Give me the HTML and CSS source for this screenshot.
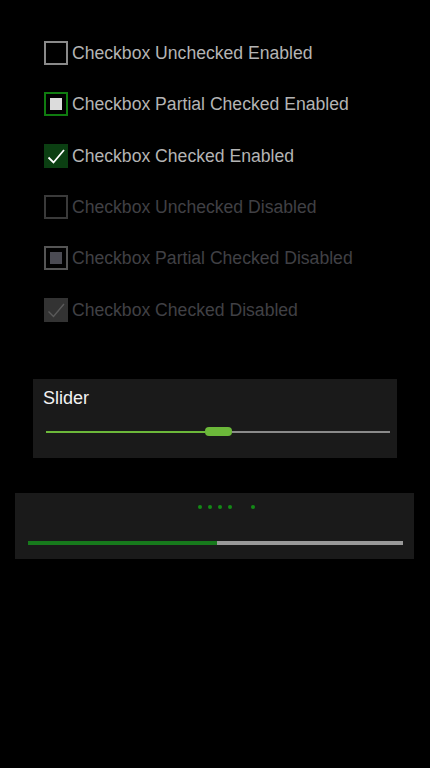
FILE: index.html
```html
<!DOCTYPE html>
<html>
<head>
<meta charset="utf-8">
<link rel="stylesheet" href="styles.css">
</head>
<body>
<div class="checklist">
  <div class="cb">
    <span class="box box-off"></span>
    <span class="label">Checkbox Unchecked Enabled</span>
  </div>
  <div class="cb">
    <span class="box box-partial"><span class="mark"></span></span>
    <span class="label">Checkbox Partial Checked Enabled</span>
  </div>
  <div class="cb">
    <span class="box box-on">
      <svg width="20" height="20" viewBox="0 0 20 20"><path d="M2.5 11.5 L7.5 16.5 L18 4" fill="none" stroke="#ffffff" stroke-width="1.8"/></svg>
    </span>
    <span class="label">Checkbox Checked Enabled</span>
  </div>
  <div class="cb disabled">
    <span class="box box-off"></span>
    <span class="label">Checkbox Unchecked Disabled</span>
  </div>
  <div class="cb disabled">
    <span class="box box-partial"><span class="mark"></span></span>
    <span class="label">Checkbox Partial Checked Disabled</span>
  </div>
  <div class="cb disabled">
    <span class="box box-on">
      <svg width="20" height="20" viewBox="0 0 20 20"><path d="M2.5 11.5 L7.5 16.5 L18 4" fill="none" stroke="#5a5a5a" stroke-width="1.4"/></svg>
    </span>
    <span class="label">Checkbox Checked Disabled</span>
  </div>
</div>

<div class="slider-card">
  <div class="slider-label">Slider</div>
  <div class="slider-track">
    <span class="fill"></span>
    <span class="thumb"></span>
    <span class="rest"></span>
  </div>
</div>

<div class="progress-card">
  <div class="dots">
    <span class="dot"></span><span class="dot"></span><span class="dot"></span><span class="dot"></span><span class="dot dot-far"></span>
  </div>
  <div class="bar"><span class="bar-fill" style="width:50.3%"></span></div>
</div>
</body>
</html>
```

FILE: styles.css
```css
html, body {
  margin: 0;
  padding: 0;
  background: #000000;
  font-family: "Liberation Sans", Arial, sans-serif;
}

.checklist {
  display: flex;
  flex-direction: column;
  gap: 27.33px;
  padding: 41px 0 0 44px;
}

.cb {
  display: flex;
  align-items: center;
  gap: 4px;
  height: 24px;
}

.box {
  box-sizing: border-box;
  width: 24px;
  height: 24px;
  flex: none;
  display: flex;
  align-items: center;
  justify-content: center;
}

.label {
  font-size: 17.6px;
  color: #b4b4b4;
  line-height: 24px;
  white-space: nowrap;
}

.box-off {
  border: 2px solid #8a8a8a;
}

.box-partial {
  border: 2px solid #107c10;
}

.box-partial .mark {
  width: 12px;
  height: 12px;
  background: #dcdcdc;
}

.box-on {
  background: #0b3f12;
}

.disabled .label {
  color: #404045;
}

.disabled .box-off {
  border-color: #3a3a3a;
}

.disabled .box-partial {
  border-color: #555555;
}

.disabled .box-partial .mark {
  background: #4b4b53;
}

.disabled .box-on {
  background: #333333;
}

.slider-card {
  box-sizing: border-box;
  margin: 57px 0 0 33px;
  width: 364px;
  height: 79px;
  background: #1a1a1a;
  padding: 9px 7px 0 13px;
}

.slider-label {
  font-size: 18px;
  line-height: 20px;
  color: #f2f2f2;
  margin-left: -3px;
}

.slider-track {
  display: flex;
  align-items: center;
  height: 10px;
  margin-top: 19px;
}

.slider-track .fill {
  width: 159px;
  height: 2px;
  background: #6cb83a;
}

.slider-track .thumb {
  width: 27px;
  height: 9px;
  border-radius: 4px;
  background: #6cb83a;
  flex: none;
}

.slider-track .rest {
  flex: 1;
  height: 2px;
  background: #8a8a8a;
}

.progress-card {
  box-sizing: border-box;
  margin: 35px 0 0 15px;
  width: 399px;
  height: 66px;
  background: #1a1a1a;
  padding: 12px 11px 0 13px;
}

.dots {
  display: flex;
  gap: 6px;
  height: 4px;
  padding-left: 170px;
}

.dot {
  width: 4px;
  height: 4px;
  border-radius: 50%;
  background: #138a16;
}

.dot-far {
  margin-left: 13px;
}

.bar {
  margin-top: 32px;
  height: 4px;
  background: #999999;
  display: flex;
}

.bar-fill {
  height: 100%;
  background: #177a1c;
}
```
